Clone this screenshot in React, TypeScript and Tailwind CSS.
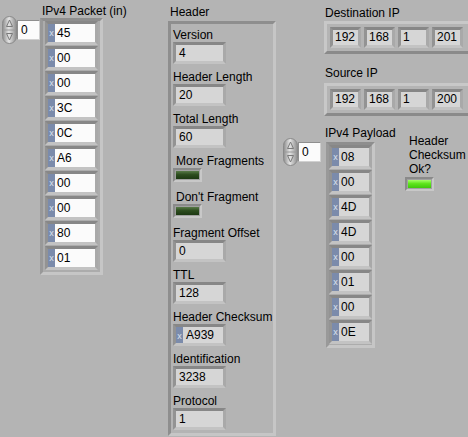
import React from "react";

// LabVIEW style front panel: IPv4 packet parser

const leftPacket = ["45", "00", "00", "3C", "0C", "A6", "00", "00", "80", "01"];
const payload = ["08", "00", "4D", "4D", "00", "01", "00", "0E"];

const Spinner = () => (
  <svg width="15" height="28" viewBox="0 0 15 28">
    <defs>
      <linearGradient id="spg" x1="0" x2="1" y1="0" y2="0">
        <stop offset="0" stopColor="#8c8c8c" />
        <stop offset="0.45" stopColor="#e4e4e4" />
        <stop offset="1" stopColor="#8c8c8c" />
      </linearGradient>
    </defs>
    <rect x="0.5" y="0.5" width="14" height="27" rx="7" fill="url(#spg)" stroke="#8a8a8a" />
    <line x1="1.5" y1="14" x2="13.5" y2="14" stroke="#9a9a9a" />
    <path d="M7.5 4 L10.5 10.5 L4.5 10.5 Z" fill="none" stroke="#7a7a7a" />
    <path d="M7.5 24 L10.5 17.5 L4.5 17.5 Z" fill="none" stroke="#7a7a7a" />
  </svg>
);

const IndexBox = ({ value }: { value: string }) => (
  <div className="w-[23px] h-[20px] bg-[#fbfbfb] border border-t-[#8e8e8e] border-l-[#8e8e8e] border-r-[#d0d0d0] border-b-[#d0d0d0] pl-[3px] text-[12px] leading-[18px]">
    {value}
  </div>
);

const Radix = () => (
  <div className="w-[7px] bg-[#7b8bab] text-[#dce3ee] text-[9px] leading-[18px] text-center">x</div>
);

const ArrayElem = ({ value, control, width }: { value: string; control?: boolean; width: string }) => (
  <div className={`${width} h-[24px] flex border-[3px] border-t-[#878787] border-l-[#939393] border-r-[#a9a9a9] border-b-[#c3c3c3]`}>
    <Radix />
    <div className={`flex-1 pl-[2px] text-[12px] leading-[18px] ${control ? "bg-[#fbfbfb]" : "bg-[#d6d6d6]"}`}>{value}</div>
  </div>
);

const Field = ({ label, value, hex }: { label: string; value: string; hex?: boolean }) => (
  <div className="flex flex-col mb-[6px]">
    <div className="h-[14px] leading-[14px] text-[12px]">{label}</div>
    <div className="w-[53px] h-[22px] flex border-[3px] border-t-[#878787] border-l-[#939393] border-r-[#a9a9a9] border-b-[#c3c3c3]">
      {hex && <Radix />}
      <div className="flex-1 bg-[#d6d6d6] pl-[3px] text-[12px] leading-[16px]">{value}</div>
    </div>
  </div>
);

const Led = ({ on }: { on?: boolean }) => (
  <div className="w-[29px] h-[14px] border-2 border-t-[#8a8a8a] border-l-[#8a8a8a] border-r-[#c8c8c8] border-b-[#c8c8c8] p-[1px] bg-[#a0a0a0]">
    <div
      className={`w-full h-full ${
        on
          ? "bg-[linear-gradient(to_bottom,#a6ff6a,#5ee51c_45%,#3fc70c)]"
          : "bg-[linear-gradient(to_bottom,#587a48,#2d4d1f_45%,#1c3812)]"
      }`}
    />
  </div>
);

const BoolField = ({ label }: { label: string }) => (
  <div className="flex flex-col mb-[8px]">
    <div className="h-[14px] leading-[14px] text-[12px] pl-[3px]">{label}</div>
    <Led />
  </div>
);

const IpCluster = ({ parts }: { parts: string[] }) => (
  <div className="w-[150px] h-[33px] border-[3px] border-t-[#c8c8c8] border-l-[#c8c8c8] border-r-[#8a8a8a] border-b-[#8a8a8a] px-[3px] pt-[3px] flex gap-[3px]">
    {parts.map((p, i) => (
      <div
        key={i}
        className="w-[31px] h-[21px] border-[3px] border-t-[#878787] border-l-[#939393] border-r-[#a9a9a9] border-b-[#c3c3c3] bg-[#d6d6d6] pl-[2px] text-[12px] leading-[15px]"
      >
        {p}
      </div>
    ))}
  </div>
);

export default function App() {
  return (
    <div className="relative w-[468px] h-[437px] bg-[#b4b4b4] overflow-hidden text-black font-['Liberation_Sans',Arial,sans-serif]">
      {/* IPv4 Packet (in) */}
      <div className="absolute left-[42px] top-[4px] text-[12px] leading-[14px]">IPv4 Packet (in)</div>
      <div className="absolute left-[2px] top-[16px] flex items-center gap-0">
        <Spinner />
        <IndexBox value="0" />
      </div>
      <div className="absolute left-[40px] top-[18px] w-[63px] border-[3px] border-t-[#8e8e8e] border-l-[#999999] border-r-[#c6c6c6] border-b-[#c6c6c6] bg-[#acacac] pl-[2px] pb-[2px] flex flex-col gap-[1px]">
        {leftPacket.map((v, i) => (
          <ArrayElem key={i} value={v} control width="w-[53px]" />
        ))}
      </div>

      {/* Header cluster */}
      <div className="absolute left-[170px] top-[5px] text-[12px] leading-[14px]">Header</div>
      <div className="absolute left-[168px] top-[21px] w-[108px] h-[415px] border-[3px] border-t-[#8e8e8e] border-l-[#8e8e8e] border-r-[#c6c6c6] border-b-[#c6c6c6] pl-[2px] pt-[4px] flex flex-col">
        <Field label="Version" value="4" />
        <Field label="Header Length" value="20" />
        <Field label="Total Length" value="60" />
        <div className="h-[3px]" />
        <BoolField label="More Fragments" />
        <BoolField label="Don't Fragment" />
        <Field label="Fragment Offset" value="0" />
        <Field label="TTL" value="128" />
        <Field label="Header Checksum" value="A939" hex />
        <Field label="Identification" value="3238" />
        <Field label="Protocol" value="1" />
      </div>

      {/* Destination / Source IP */}
      <div className="absolute left-[325px] top-[6px] text-[12px] leading-[14px]">Destination IP</div>
      <div className="absolute left-[324px] top-[21px]">
        <IpCluster parts={["192", "168", "1", "201"]} />
      </div>
      <div className="absolute left-[325px] top-[66px] text-[12px] leading-[14px]">Source IP</div>
      <div className="absolute left-[324px] top-[83px]">
        <IpCluster parts={["192", "168", "1", "200"]} />
      </div>

      {/* IPv4 Payload */}
      <div className="absolute left-[325px] top-[126px] text-[12px] leading-[14px]">IPv4 Payload</div>
      <div className="absolute left-[283px] top-[138px] flex items-center">
        <Spinner />
        <IndexBox value="0" />
      </div>
      <div className="absolute left-[326px] top-[142px] w-[49px] border-[3px] border-t-[#8e8e8e] border-l-[#999999] border-r-[#c6c6c6] border-b-[#c6c6c6] bg-[#acacac] pb-[1px] flex flex-col gap-[1px]">
        {payload.map((v, i) => (
          <ArrayElem key={i} value={v} width="w-[43px]" />
        ))}
      </div>

      {/* Header Checksum Ok? */}
      <div className="absolute left-[409px] top-[134px] text-[12px] leading-[14px]">
        Header
        <br />
        Checksum
        <br />
        Ok?
      </div>
      <div className="absolute left-[405px] top-[177px]">
        <Led on />
      </div>
    </div>
  );
}
